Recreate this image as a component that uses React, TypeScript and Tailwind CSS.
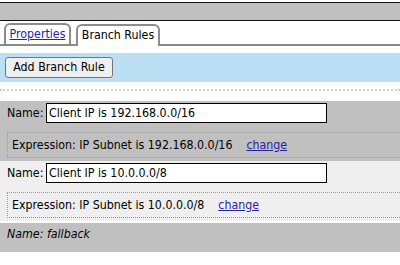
import React from "react";

const font = { fontFamily: '"DejaVu Sans Condensed", "DejaVu Sans", sans-serif' };

function Rule({ bg, name, expr }: { bg: string; name: string; expr: string }) {
  return (
    <div className={`${bg} pt-[2px] pb-[3px]`}>
      <div className="flex items-center h-[20px]">
        <span className="pl-[7px] w-[46px] text-[12.3px] text-black">Name:</span>
        <div className="w-[281px] h-[20px] border border-black bg-white text-[12.3px] leading-[18px] pl-[2px] text-black">
          {name}
        </div>
      </div>
      <div className="mt-[9px] ml-[7px] h-[26px] border-y border-l border-dotted border-[#9a9a9a] flex items-center pl-[4px] text-[12.3px] text-black">
        <span>Expression: {expr}</span>
        <a href="#" className="ml-[14px] underline text-[#2a1ea8]">change</a>
      </div>
    </div>
  );
}

export default function App() {
  return (
    <div className="w-[400px] h-[265px] bg-white overflow-hidden" style={font}>
      <div className="mt-[2px] h-[19px] bg-[#c0c0c0] border-y border-[#111]" />
      <div className="mt-[3px] flex items-end h-[22px] border-b-[2px] border-[#8a8a8a]">
        <div className="ml-[4px] w-[67px] h-[21px] border-2 border-b-0 border-[#8c8c8c] rounded-t-[6px] bg-white flex items-center justify-center text-[12.3px]">
          <a href="#" className="text-[#2a1ea8] underline">Properties</a>
        </div>
        <div className="ml-[5px] w-[84px] h-[22px] border-2 border-b-0 border-[#8c8c8c] rounded-t-[6px] bg-white flex items-center justify-center text-[12.3px] text-black mb-[-2px] pb-[1px]">
          Branch Rules
        </div>
      </div>
      <div className="mt-[7px] h-[29px] bg-[#bbe0f6] flex items-center pl-[5px]">
        <button className="h-[21px] w-[108px] bg-[#efefef] border border-[#767676] rounded-[3px] text-[12.3px] text-black">
          Add Branch Rule
        </button>
      </div>
      <div className="mt-[7px] border-t-[2px] border-dotted border-[#cfcfcf]" />
      <div className="mt-[10px]">
        <Rule bg="bg-[#c0c0c0]" name="Client IP is 192.168.0.0/16" expr="IP Subnet is 192.168.0.0/16" />
        <Rule bg="bg-[#efefef]" name="Client IP is 10.0.0.0/8" expr="IP Subnet is 10.0.0.0/8" />
        <div className="mt-[2px] h-[29px] bg-[#c0c0c0] pl-[7px] pt-[2px] text-[12.3px] italic text-black">
          Name: fallback
        </div>
      </div>
    </div>
  );
}
